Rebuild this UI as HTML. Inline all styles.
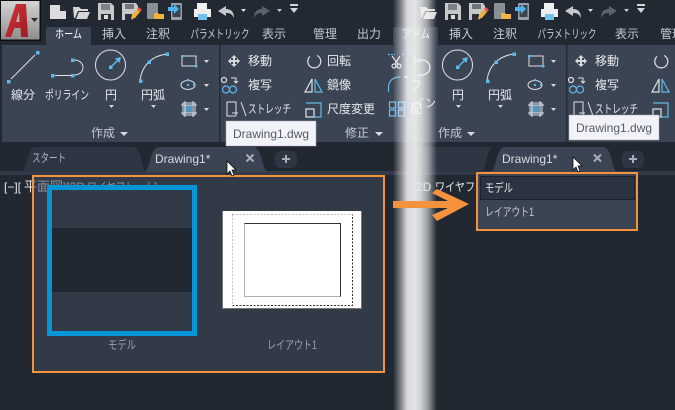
<!DOCTYPE html>
<html lang="ja"><head><meta charset="utf-8"><style>
html,body{margin:0;padding:0;background:#222831;width:675px;height:410px;overflow:hidden}
svg{display:block;position:absolute;left:0;top:0}
text{font-family:"Liberation Sans","Noto Sans CJK JP",sans-serif;font-size:12px;fill:#e6e9ee}
.m{text-anchor:middle}
.t{fill:#c3c9d2}
.g{fill:#9aa2ad}
</style></head><body>
<svg width="675" height="410" viewBox="0 0 675 410" xmlns="http://www.w3.org/2000/svg">
<defs>
<linearGradient id="band" gradientUnits="userSpaceOnUse" x1="393" x2="437" y1="0" y2="0">
<stop offset="0" stop-color="#fff" stop-opacity="0"/>
<stop offset=".05" stop-color="#fff" stop-opacity=".12"/>
<stop offset=".16" stop-color="#fff" stop-opacity=".38"/>
<stop offset=".32" stop-color="#fff" stop-opacity=".82"/>
<stop offset=".5" stop-color="#f4f4f4" stop-opacity=".92"/>
<stop offset=".62" stop-color="#f0f0f0" stop-opacity=".85"/>
<stop offset=".8" stop-color="#fff" stop-opacity=".52"/>
<stop offset=".95" stop-color="#fff" stop-opacity=".12"/>
<stop offset="1" stop-color="#fff" stop-opacity="0"/>
</linearGradient>
<linearGradient id="ab" x1="0" x2="0" y1="0" y2="1"><stop offset="0" stop-color="#d4d4d4"/><stop offset="1" stop-color="#8e8e8e"/></linearGradient>
<linearGradient id="ar" x1="0" x2="1" y1="0" y2="1"><stop offset="0" stop-color="#d8343a"/><stop offset="1" stop-color="#9c1c22"/></linearGradient>
<clipPath id="cl"><rect x="0" y="0" width="415" height="410"/></clipPath>
<clipPath id="cr"><rect x="415" y="0" width="260" height="410"/></clipPath>
<clipPath id="c33"><rect x="0" y="170" width="33" height="40"/></clipPath>
<clipPath id="c476"><rect x="410" y="170" width="66" height="40"/></clipPath>
<g id="qat">
<path d="M50 5h10l6 6v8H50z" fill="#dcdcdc"/><path d="M60 5v6h6z" fill="#222933"/>
<path d="M74 18l-1-11h6l2 2h7v2H78l-3 7zM76 19l3-7h11l-3 7z" fill="#d6d6d6"/>
<path d="M98 3h13l3 3v14H98z" fill="#c8c8c8"/><rect x="101" y="4" width="9" height="6" fill="#7c828a"/><rect x="101" y="14" width="10" height="6" fill="#2a303a"/><rect x="104" y="15" width="4" height="4" fill="#ddd"/>
<path d="M122 3h14l2 3v6l-6 8h-10z" fill="#c8c8c8"/><rect x="125" y="4" width="9" height="5" fill="#6f757d"/><rect x="125" y="14" width="7" height="6" fill="#2a303a"/>
<path d="M131 19l1-4 5-6 3 3-5 6z" fill="#f0b040"/><path d="M137 9l2-2 3 3-2 2z" fill="#e0584a"/>
<rect x="147" y="3" width="11" height="16" rx="1" fill="#8a8f96"/><path d="M154 13h4l1 1h5v5h-10z" fill="#f3b33d"/>
<rect x="171" y="3" width="11" height="17" rx="1" fill="#9aa0a8"/><rect x="172.500" y="5" width="8" height="12" fill="#3b4351"/><path d="M168 7h6V4l5 5-5 5v-3h-6z" fill="#4fb4ea"/>
<path d="M197 3h10v6h-10z" fill="#f1f1f1"/><rect x="194" y="9" width="17" height="8" fill="#eee"/><rect x="198" y="14" width="9" height="6" fill="#6fc1ee"/>
<path d="M218 11l8-5v3c6 0 8 4 8 9-2-4-4-5-8-5v3z" fill="#c5c9ce"/><path d="M241 9h5l-2.500 3z" fill="#dcdcdc"/>
<path d="M270 11l-8-5v3c-6 0-8 4-8 9 2-4 4-5 8-5v3z" fill="#5c626c"/><path d="M277 9h5l-2.500 3z" fill="#c5c9ce"/>
<rect x="290" y="4" width="8" height="2" fill="#d5d5d5"/><path d="M290 8h8l-4 5z" fill="#d5d5d5"/>
</g>
<g id="rib">
<rect x="0" y="27" width="500" height="18" fill="#222933"/>
<rect x="2" y="45" width="600" height="97" fill="#3b4453"/>
<rect x="46" y="27" width="45" height="18" rx="2" fill="#3b4453"/>
<rect x="219" y="45" width="1.500" height="97" fill="#252c37"/>
<path d="M184 105h8v8h-8z" fill="#5fb8ea" opacity=".7"/>
<g fill="none" stroke="#dfe2e6" stroke-width="1">
<path d="M11 79L35 55"/><path d="M55 75.500h17M74 60c12 0 12 15 0 15"/>
<circle cx="110.500" cy="65" r="15"/><path d="M111 67l8-8" stroke="#5fb8ea" stroke-width="1.500"/>
<path d="M140 80c2-14 11-24 27-26"/><path d="M182 56h14v10h-14z"/>
<ellipse cx="188" cy="85" rx="7" ry="4.500"/>
<path d="M183 103h12v12h-12zM181 105h16M181 113h16M185 101v16M193 101v16"/>
</g>
<g fill="#5fb8ea">
<rect x="7" y="80" width="3.500" height="3.500"/><rect x="36" y="51" width="3.500" height="3.500"/>
<rect x="51" y="74" width="3.500" height="3.500"/><rect x="71" y="74" width="3.500" height="3.500"/><rect x="71" y="58.500" width="3.500" height="3.500"/>
<rect x="109" y="65.500" width="3.500" height="3.500"/><path d="M121 57l-1.500 6-4.500-4.500z"/>
<rect x="139" y="79.500" width="3.500" height="3.500"/><rect x="147.500" y="60.500" width="3.500" height="3.500"/><rect x="165.500" y="52.500" width="3.500" height="3.500"/>
<rect x="181" y="55" width="2.500" height="2.500"/><rect x="195" y="65" width="2.500" height="2.500"/>
<circle cx="188" cy="80" r="1.200"/><circle cx="188" cy="85" r="1.200"/><circle cx="194" cy="85" r="1.200"/>
</g>
<g fill="#d5d8dc">
<path d="M109 105h5l-2.500 3zM151 105h5l-2.500 3zM204 60h5l-2.500 3zM204 84h5l-2.500 3zM204 108h5l-2.500 3zM120 132h8l-4 4zM375 132h8l-4 4z"/>
<path d="M234 55l3 3h-2v2h2v-2l3 3-3 3v-2h-2v2h2l-3 3-3-3h2v-2h-2v2l-3-3 3-3v2h2v-2h-2z"/>
</g>
<g fill="none" stroke="#dfe2e6" stroke-width="1.200">
<path d="M317 55.500a6.500 6.500 0 1 1-7 1"/>
<circle cx="224" cy="80" r="2.500"/><circle cx="226" cy="89.500" r="3.500" stroke="#5fb8ea"/><circle cx="233" cy="89.500" r="3.500" stroke="#5fb8ea"/>
<path d="M231 78h5v5M234 81l2 2 2-2" stroke-width="1"/>
<path d="M312 79l-7 13h7z"/><path d="M315 79l7 13h-7z" stroke="#5fb8ea"/>
<path d="M236 116h-9v-14h9v14M241 102l5 14M232 113h6" stroke-width="1"/>
<path d="M306 103h15v14h-7" stroke="#5fb8ea"/><rect x="306" y="109" width="8" height="8"/>
</g>
<g id="third" fill="none" stroke-width="1.200">
<path d="M388 54.500h7M402 54.500h3" stroke="#5fb8ea" stroke-dasharray="2 1"/>
<path d="M392 56l6 8M400 56l-5 8" stroke="#dfe2e6"/><circle cx="394" cy="66" r="2" stroke="#dfe2e6"/><circle cx="399" cy="66" r="2" stroke="#dfe2e6"/>
<path d="M388.500 92v-6c1-6 5-9 12-9" stroke="#5fb8ea"/><path d="M404 77h4" stroke="#dfe2e6"/>
<path d="M389.500 102h6v6h-6zM398.500 102h6v6h-6zM389.500 110h6v6h-6zM398.500 110h6v6h-6z" stroke="#6dbcf0"/>
</g>
</g>
</defs>

<rect width="675" height="410" fill="#222831"/>
<rect width="675" height="27" fill="#222933"/>

<!-- LEFT -->
<g clip-path="url(#cl)">
<use href="#qat"/>
<use href="#rib"/>
<rect x="0" y="0" width="41" height="41" fill="#0e0e0e"/>
<rect x="1" y="1" width="38.500" height="38.500" fill="url(#ab)"/>
<path fill-rule="evenodd" d="M5 37L16 4h10l2 33h-7l-.5-9h-6L11 37zM19 12l-3 10h3.500z" fill="url(#ar)"/>
<path d="M31 18h7l-3.500 4z" fill="#2a2a2a"/>
<rect x="393" y="27" width="45" height="18" rx="2" fill="#3b4453"/>
<text class="m" x="68.500" y="38" style="fill:#fff" textLength="27" lengthAdjust="spacingAndGlyphs">ホーム</text>
<text class="m t" x="114" y="38">挿入</text><text class="m t" x="158" y="38">注釈</text><text class="m t" x="220" y="38" textLength="59" lengthAdjust="spacingAndGlyphs">パラメトリック</text><text class="m t" x="274" y="38">表示</text><text class="m t" x="325" y="38">管理</text><text class="m t" x="369" y="38">出力</text>
<text class="m" x="23" y="99">線分</text><text class="m" x="67" y="99" textLength="44" lengthAdjust="spacingAndGlyphs">ポリライン</text><text class="m" x="111" y="99">円</text><text class="m" x="153" y="99">円弧</text>
<text class="m t" x="103" y="137">作成</text>
<text x="248" y="65">移動</text><text x="248" y="89">複写</text><text x="248" y="113" textLength="43" lengthAdjust="spacingAndGlyphs">ストレッチ</text>
<text x="327" y="65">回転</text><text x="327" y="89">鏡像</text><text x="327" y="113">尺度変更</text>
<text class="m t" x="357" y="137">修正</text>
<rect x="0" y="142" width="415" height="33" fill="#222831"/>
<rect x="0" y="171" width="415" height="4" fill="#343b48"/>
<path d="M22 172c5-2 5-25 14-25h97c10 0 8 25 13 25z" fill="#2f3643"/>
<path d="M145 172c5-2 5-25 14-25h94c10 0 8 25 16 25z" fill="#3b4453"/>
<text x="32" y="162" style="fill:#aeb5bf" textLength="34" lengthAdjust="spacingAndGlyphs">スタート</text>
<text x="155" y="163" style="fill:#d8dce2">Drawing1*</text>
<path d="M246.500 154.500l7 7M253.500 154.500l-7 7" stroke="#a8adb5" stroke-width="2"/>
<rect x="275" y="151" width="22" height="17" rx="6" fill="#2f3643"/>
<path d="M286 155v8M282 159h8" stroke="#a8adb5" stroke-width="2"/>
<rect x="33" y="176" width="351" height="196" fill="#333a47" stroke="#f5923e" stroke-width="2"/>
<text x="4" y="191" style="fill:#8c939d">[−][</text><text x="24" y="191" style="fill:#8c939d;font-size:13px">平面図</text><text x="63" y="191" style="fill:#8c939d">][2D</text><text x="87" y="191" style="fill:#8c939d" textLength="70" lengthAdjust="spacingAndGlyphs">ワイヤフレーム]</text>
<g clip-path="url(#c33)"><rect x="0" y="176" width="32" height="20" fill="#222831"/><text x="4" y="191" style="fill:#e6e9ee">[−][</text><text x="24" y="191" style="fill:#e6e9ee;font-size:13px">平面図</text></g>
<rect x="32" y="175" width="2" height="30" fill="#f5923e"/>
<rect x="49.500" y="187.500" width="145" height="146" fill="#333a47" stroke="#0696d7" stroke-width="5"/>
<rect x="52" y="228" width="140" height="64" fill="#222831"/>
<text class="m g" x="122" y="349" textLength="28" lengthAdjust="spacingAndGlyphs">モデル</text>
<rect x="222" y="211" width="140" height="98" fill="#fff"/>
<path d="M222 308.500h140M361.500 211v98M222.500 211v98" stroke="#777" fill="none"/>
<rect x="232.500" y="214.500" width="120" height="91" fill="none" stroke="#333" stroke-dasharray="2 1.500"/>
<path d="M232.500 214.500h120M232.500 214.500v91" fill="none" stroke="#c4c4c4" stroke-dasharray="2 1.500"/>
<rect x="244.500" y="223.500" width="96" height="73" fill="#fff" stroke="#b0b0b0"/>
<path d="M244.500 223.500h96v73" fill="none" stroke="#333"/>
<text class="m g" x="292" y="349" textLength="50" lengthAdjust="spacingAndGlyphs">レイアウト1</text>
<rect x="226" y="121" width="90" height="25" fill="#f1f3f8" stroke="#aab" stroke-width=".5"/>
<text x="233" y="138" style="fill:#555b65">Drawing1.dwg</text>
<path d="M227 161v13l3-3 2 5 2-1-2-5h4z" fill="#fff" stroke="#000" stroke-width=".7"/>
</g>

<!-- RIGHT -->
<g clip-path="url(#cr)">
<use href="#qat" transform="translate(347 0)"/>
<use href="#rib" transform="translate(347 0)"/>
<rect x="415" y="27" width="23" height="18" fill="#3b4453"/>
<text class="m t" x="461" y="38">挿入</text><text class="m t" x="505" y="38">注釈</text><text class="m t" x="567" y="38" textLength="59" lengthAdjust="spacingAndGlyphs">パラメトリック</text><text class="m t" x="627" y="38">表示</text><text class="m t" x="672" y="38">管理</text>
<text class="m" x="458" y="99">円</text><text class="m" x="500" y="99">円弧</text>
<text x="595" y="65">移動</text><text x="595" y="89">複写</text><text x="595" y="113" textLength="43" lengthAdjust="spacingAndGlyphs">ストレッチ</text>
<text class="m t" x="450" y="137">作成</text>
<rect x="415" y="142" width="260" height="33" fill="#222831"/>
<rect x="415" y="171" width="260" height="4" fill="#343b48"/>
<path d="M415 172v-25h78c-8 2-5 25-14 25z" fill="#2f3643"/>
<path d="M491 172c5-2 5-25 14-25h98c10 0 8 25 15 25z" fill="#3b4453"/>
<text x="502" y="163" style="fill:#d8dce2">Drawing1*</text>
<path d="M594 154.500l7 7M601 154.500l-7 7" stroke="#a8adb5" stroke-width="2"/>
<rect x="622" y="151" width="22" height="17" rx="6" fill="#2f3643"/>
<path d="M633 155v8M629 159h8" stroke="#a8adb5" stroke-width="2"/>
<rect x="477" y="173" width="160" height="57" fill="#3b4453" stroke="#f5923e" stroke-width="2"/>
<rect x="480.500" y="176.500" width="154" height="23" fill="#2c3340" stroke="#1b212a"/>
<text x="485" y="192" style="fill:#e6e9ee" textLength="28" lengthAdjust="spacingAndGlyphs">モデル</text>
<text x="485" y="216" style="fill:#c3c9d2" textLength="49" lengthAdjust="spacingAndGlyphs">レイアウト1</text>
<rect x="569" y="115" width="90" height="25" fill="#f1f3f8" stroke="#aab" stroke-width=".5"/>
<text x="576" y="132" style="fill:#555b65">Drawing1.dwg</text>
<path d="M573 157v13l3-3 2 5 2-1-2-5h4z" fill="#fff" stroke="#000" stroke-width=".7"/>
</g>

<!-- torn band -->
<rect x="393" y="0" width="44" height="410" fill="url(#band)"/>

<!-- content visible through the band -->
<text x="402" y="38" style="fill:#eef0f3" textLength="28" lengthAdjust="spacingAndGlyphs">アドム</text>
<text x="410" y="65" style="fill:#f4f5f7">ト</text>
<text x="410" y="89" style="fill:#f4f5f7">フ</text>
<text x="414" y="107" style="fill:#eef0f3" textLength="22" lengthAdjust="spacingAndGlyphs">イン</text>
<text x="410" y="113" style="fill:#f4f5f7">配</text>
<path d="M421 60c12 0 12 15 0 15" fill="none" stroke="#f4f5f7" stroke-width="1"/>
<g clip-path="url(#c476)"><text x="416" y="191" style="fill:#e6e9ee">2D</text><text x="435" y="191" style="fill:#e6e9ee" textLength="70" lengthAdjust="spacingAndGlyphs">ワイヤフレーム</text></g>

<!-- arrow -->
<path d="M393 201h55l-16-8 5-4 32 15-32 17-5-6 16-7h-55z" fill="#f5923e"/>
</svg>
</body></html>
